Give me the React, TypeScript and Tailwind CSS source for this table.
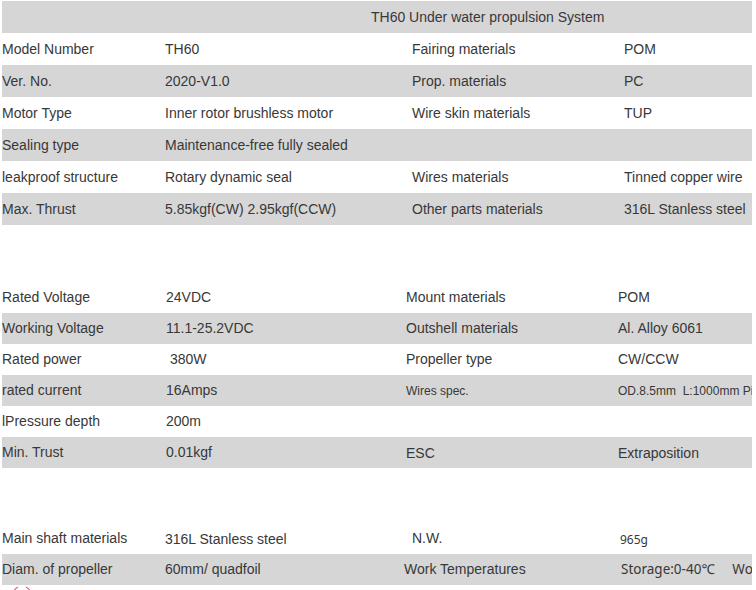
const arial = { fontFamily: '"Liberation Sans", Arial, sans-serif' }

type Row = { cells: [string, string, string, string]; gray?: boolean }

const sectionOne: Row[] = [
  { cells: ['Model Number', 'TH60', 'Fairing materials', 'POM'] },
  { cells: ['Ver. No.', '2020-V1.0', 'Prop. materials', 'PC'], gray: true },
  { cells: ['Motor Type', 'Inner rotor brushless motor', 'Wire skin materials', 'TUP'] },
  { cells: ['Sealing type', 'Maintenance-free fully sealed', '', ''], gray: true },
  { cells: ['leakproof structure', 'Rotary dynamic seal', 'Wires materials', 'Tinned copper wire'] },
  { cells: ['Max. Thrust', '5.85kgf(CW) 2.95kgf(CCW)', 'Other parts materials', '316L Stanless steel'], gray: true },
]

export default function App() {
  return (
    <div className="w-[756px] h-[590px] overflow-hidden bg-white text-[14px] text-[#383838]" style={arial}>
      <div className="ml-[2px] w-[750px] overflow-hidden whitespace-nowrap">
        {/* first block */}
        <div className="mt-[1px] h-[32px] bg-[#d6d6d6] flex items-center pl-[369px]">
          TH60 Under water propulsion System
        </div>
        {sectionOne.map((row) => (
          <div
            key={row.cells[0]}
            className={`grid grid-cols-[163px_247px_212px_128px] h-[32px] items-center ${row.gray ? 'bg-[#d6d6d6]' : ''}`}
          >
            {row.cells.map((c, i) => (
              <div key={i}>{c}</div>
            ))}
          </div>
        ))}

        {/* second block */}
        <div className="mt-[57px]">
          <div className="grid grid-cols-[164px_240px_212px_134px] h-[31px] items-center">
            <div>Rated Voltage</div>
            <div>24VDC</div>
            <div>Mount materials</div>
            <div>POM</div>
          </div>
          <div className="grid grid-cols-[164px_240px_212px_134px] h-[31px] items-center bg-[#d6d6d6]">
            <div>Working Voltage</div>
            <div>11.1-25.2VDC</div>
            <div>Outshell materials</div>
            <div>Al. Alloy 6061</div>
          </div>
          <div className="grid grid-cols-[164px_240px_212px_134px] h-[31px] items-center">
            <div>Rated power</div>
            <div className="pl-[4px]">380W</div>
            <div>Propeller type</div>
            <div>CW/CCW</div>
          </div>
          <div className="grid grid-cols-[164px_240px_212px_134px] h-[31px] items-center bg-[#d6d6d6]">
            <div>rated current</div>
            <div>16Amps</div>
            <div className="text-[12px]">Wires spec.</div>
            <div className="text-[12px] whitespace-pre">OD.8.5mm  L:1000mm Pin type</div>
          </div>
          <div className="grid grid-cols-[164px_240px_212px_134px] h-[31px] items-center">
            <div>lPressure depth</div>
            <div>200m</div>
            <div></div>
            <div></div>
          </div>
          <div className="grid grid-cols-[164px_240px_212px_134px] h-[31px] items-center bg-[#d6d6d6]">
            <div>Min. Trust</div>
            <div>0.01kgf</div>
            <div className="pt-[2px]">ESC</div>
            <div className="pt-[2px]">Extraposition</div>
          </div>
        </div>

        {/* third block */}
        <div className="mt-[55px]">
          <div className="grid grid-cols-[163px_239px_216px_132px] h-[31px] items-center">
            <div>Main shaft materials</div>
            <div className="pt-[2px]">316L Stanless steel</div>
            <div className="pl-[8px]">N.W.</div>
            <div className="text-[12px] pt-[2px]" style={{ fontFamily: '"Noto Sans", sans-serif' }}>965g</div>
          </div>
          <div className="grid grid-cols-[163px_239px_216px_132px] h-[31px] items-center bg-[#d6d6d6]">
            <div>Diam. of propeller</div>
            <div>60mm/ quadfoil</div>
            <div>Work Temperatures</div>
            <div className="pl-[1px] text-[13.5px] whitespace-pre" style={{ fontFamily: '"Noto Sans", sans-serif' }}>
              Storage:0-40℃     Working:-10-35℃
            </div>
          </div>
        </div>

        {/* cropped red mark at the very bottom */}
        <svg width="30" height="6" viewBox="0 0 30 6" className="ml-[6px] mt-[1px]">
          <path d="M10 1 Q6 3 6 6" stroke="#d9627a" strokeWidth="1.2" fill="none" />
          <path d="M18 1 Q22 3 22 6" stroke="#d9627a" strokeWidth="1.2" fill="none" />
        </svg>
      </div>
    </div>
  )
}
